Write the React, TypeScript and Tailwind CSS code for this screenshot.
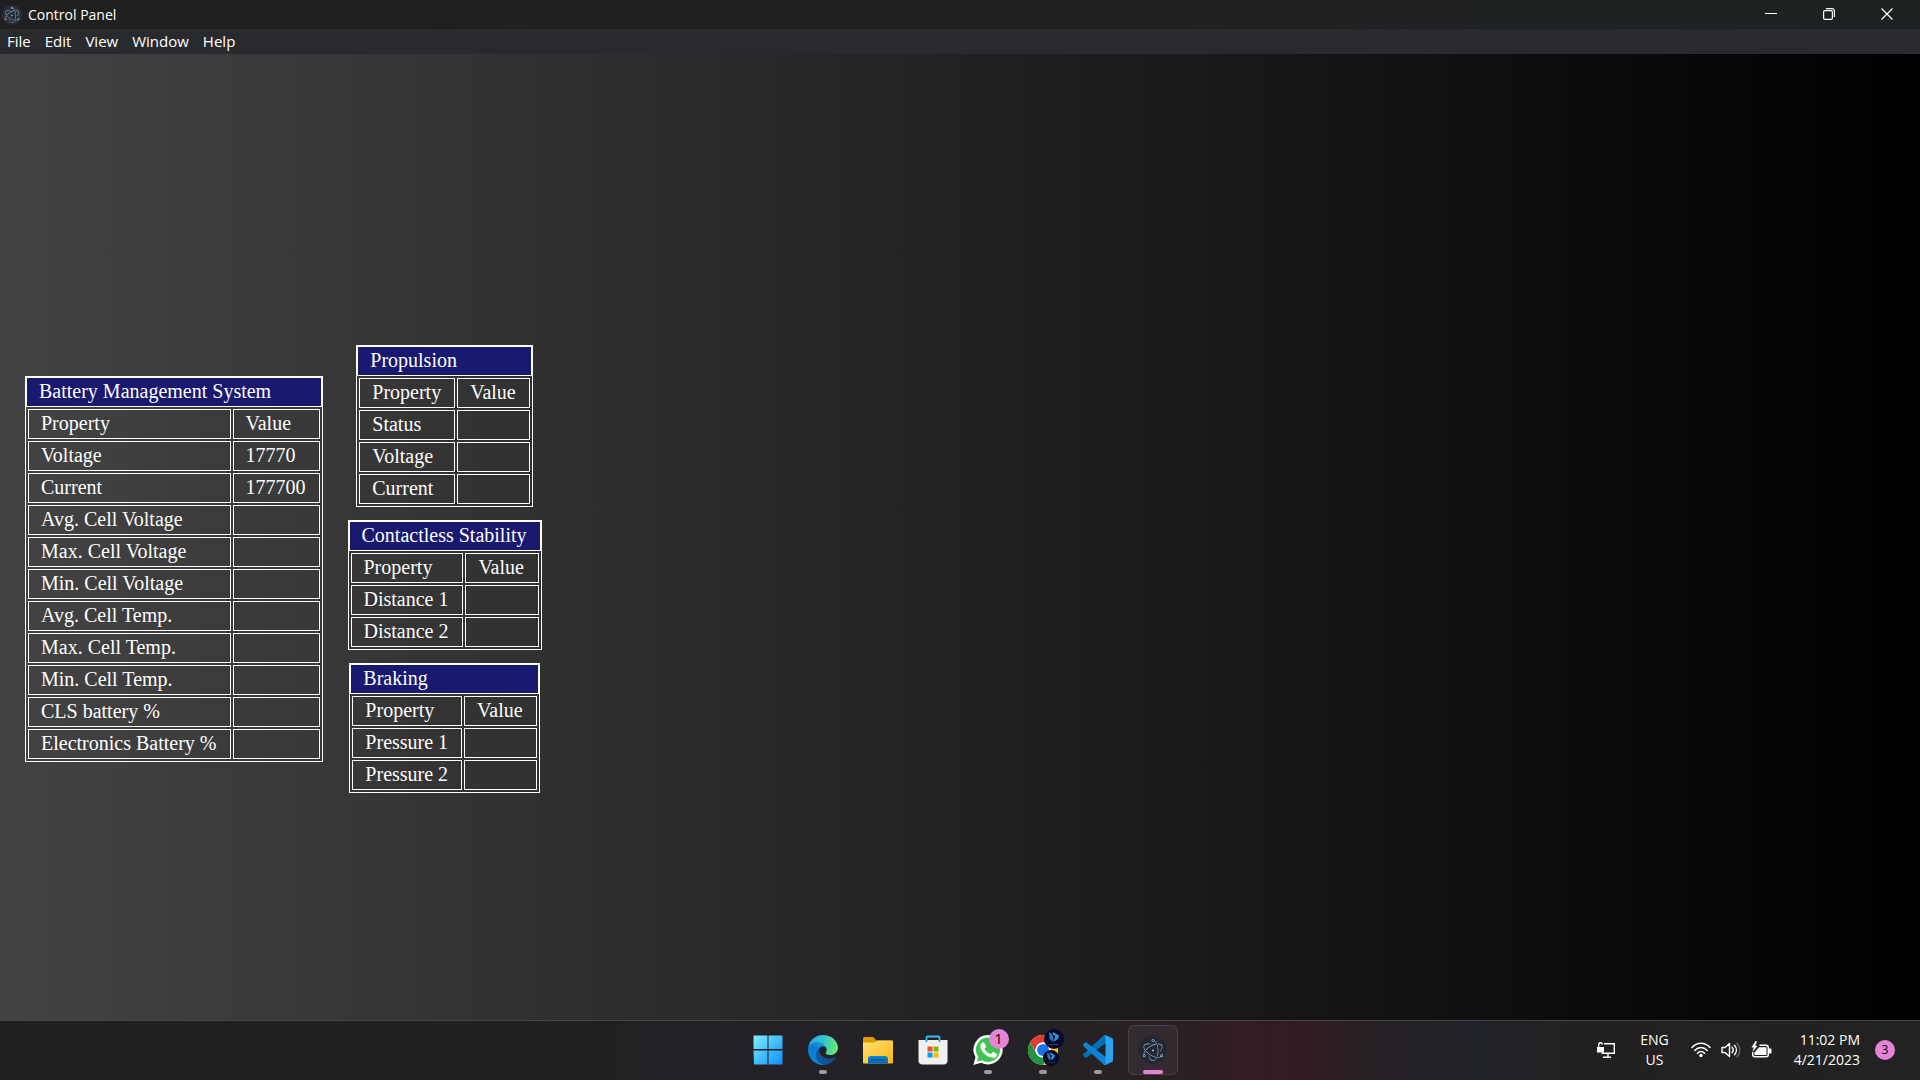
import React from "react";
import { SiElectron } from "react-icons/si";

type Row = [string, string?];

const cell = "border border-white pt-0 pr-[13px] pb-0.5 pl-3";

function Panel({ title, rows }: { title: string; rows: Row[] }) {
  return (
    <section className="border border-white text-xl leading-[26px] text-white">
      <h2 className="border border-white bg-[#191970] pr-[13px] pb-0.5 pl-3">{title}</h2>
      <table className="w-full border-separate border-spacing-[2px]">
        <thead>
          <tr>
            <th scope="col" className={`${cell} text-left font-normal`}>Property</th>
            <th scope="col" className={`${cell} text-left font-normal`}>Value</th>
          </tr>
        </thead>
        <tbody>
          {rows.map(([name, value]) => (
            <tr key={name}>
              <td className={cell}>{name}</td>
              <td className={cell}>{value}</td>
            </tr>
          ))}
        </tbody>
      </table>
    </section>
  );
}

const battery: Row[] = [
  ["Voltage", "17770"],
  ["Current", "177700"],
  ["Avg. Cell Voltage"],
  ["Max. Cell Voltage"],
  ["Min. Cell Voltage"],
  ["Avg. Cell Temp."],
  ["Max. Cell Temp."],
  ["Min. Cell Temp."],
  ["CLS battery %"],
  ["Electronics Battery %"],
];

function Start() {
  return (
    <svg viewBox="0 0 30 30" className="size-[30px]">
      <defs>
        <linearGradient id="win" gradientUnits="userSpaceOnUse" x1="0" y1="0" x2="30" y2="30">
          <stop offset="0" stopColor="#7ff0ff" />
          <stop offset="1" stopColor="#0a8cfa" />
        </linearGradient>
      </defs>
      <path fill="url(#win)" d="M1 .5h13.500V14H.5V1zM15.500 .5h14V14h-14zM.5 15.500h14v14H1zM15.500 15.500h14v14h-14z" />
    </svg>
  );
}

function Edge() {
  return (
    <svg viewBox="0 0 256 256" className="size-[30px]">
      <defs>
        <linearGradient id="ea" x1="63" y1="178" x2="241" y2="178" gradientUnits="userSpaceOnUse">
          <stop offset="0" stopColor="#0c59a4" />
          <stop offset="1" stopColor="#114a8b" />
        </linearGradient>
        <linearGradient id="eb" x1="160" y1="100" x2="46" y2="224" gradientUnits="userSpaceOnUse">
          <stop offset="0" stopColor="#1b9de2" />
          <stop offset=".5" stopColor="#0a7bd0" />
          <stop offset="1" stopColor="#0f7fd8" />
        </linearGradient>
        <linearGradient id="ec" x1="10" y1="60" x2="250" y2="110" gradientUnits="userSpaceOnUse">
          <stop offset="0" stopColor="#2aa8e8" />
          <stop offset=".45" stopColor="#35c1d0" />
          <stop offset="1" stopColor="#66eb6e" />
        </linearGradient>
      </defs>
      <path fill="url(#ea)" d="M231 190.500a94 94 0 0 1-10.500 4.700 102 102 0 0 1-36 6.500c-47.400 0-88.700-32.600-88.700-74.500a31.500 31.500 0 0 1 16.400-27.300C69.400 101.700 58.400 146.400 58.400 172.600c0 74 68.200 81.600 83 81.600 7.900 0 19.800-2.300 27-4.600l1.300-.4a128.300 128.300 0 0 0 66.600-52.800 4 4 0 0 0-5.300-5.900z" />
      <path fill="url(#eb)" d="M105.700 241.400a79.200 79.200 0 0 1-22.700-21.300 80.700 80.700 0 0 1 29.500-120.200c3.200-1.500 8.500-4.200 15.600-4a32.400 32.400 0 0 1 25.700 13 31.900 31.900 0 0 1 6.300 18.700c0-.2 24.500-79.600-80-79.600C36.200 48 .1 89.700.1 126.200a130.500 130.500 0 0 0 12.100 56 128 128 0 0 0 156.400 67 75.500 75.500 0 0 1-62.800-8z" />
      <path fill="url(#ec)" d="M152.300 148.900c-.8 1-3.300 2.500-3.300 5.700 0 2.600 1.700 5.100 4.700 7.200 14.400 10 41.500 8.700 41.600 8.700a59.600 59.600 0 0 0 30.300-8.300 61.400 61.400 0 0 0 30.400-52.900c.3-22.400-8-37.300-11.300-43.900C223.500 23.900 177.700 0 128 0A128 128 0 0 0 0 126.200c.5-36.500 36.800-66 80-66 3.500 0 23.500.3 42 10 16.300 8.600 24.900 19 30.800 29.200 6.200 10.700 7.300 24.100 7.300 29.500 0 5.300-2.700 13.300-7.800 20z" />
    </svg>
  );
}

function Folder() {
  return (
    <svg viewBox="0 0 32 30" className="h-[30px] w-8">
      <defs>
        <linearGradient id="fo" x1="0" y1="0" x2="1" y2="1">
          <stop offset="0" stopColor="#ffe07a" />
          <stop offset="1" stopColor="#f9b90a" />
        </linearGradient>
        <linearGradient id="fb" x1="0" y1="0" x2="0" y2="1">
          <stop offset="0" stopColor="#0e86d6" />
          <stop offset="1" stopColor="#0569b8" />
        </linearGradient>
      </defs>
      <path fill="#de9a05" d="M1 3.500A1.500 1.500 0 0 1 2.500 2h8.800l3.200 3.500H30V13H1z" />
      <path fill="url(#fo)" d="M1 7.500h11.500l3.200-2H30a1 1 0 0 1 1 1v21a1 1 0 0 1-1 1H2a1 1 0 0 1-1-1z" />
      <path fill="url(#fb)" d="M6 28.500V24a3 3 0 0 1 3-3h14a3 3 0 0 1 3 3v4.500z" />
      <path stroke="#064b8a" strokeWidth="1.200" d="M9 24.800h14" />
    </svg>
  );
}

function Store() {
  return (
    <svg viewBox="0 0 30 30" className="size-[30px]">
      <path fill="none" stroke="#31bff2" strokeWidth="1.800" d="M8.500 7V2.500a1 1 0 0 1 1-1h11a1 1 0 0 1 1 1V7" />
      <path fill="#f0f0f0" d="M.5 5h29v20.500a4 4 0 0 1-4 4h-21a4 4 0 0 1-4-4z" />
      <path stroke="#1aa0dc" strokeWidth="1.800" d="M8.500 4.500V7M21.500 4.500V7" />
      <path fill="#f25022" d="M9.500 11.500h5v5h-5z" />
      <path fill="#7fba00" d="M15.500 11.500h5v5h-5z" />
      <path fill="#00a4ef" d="M9.500 17.500h5v5h-5z" />
      <path fill="#ffb900" d="M15.500 17.500h5v5h-5z" />
    </svg>
  );
}

function WhatsApp() {
  return (
    <svg viewBox="0 0 30 30" className="size-[30px]">
      <path fill="#fff" d="M15.200 0A14.700 14.700 0 0 0 2.500 22.200L.3 29.900l8-2.100A14.700 14.700 0 1 0 15.200 0z" />
      <path fill="#3fc351" d="M15.200 2.500A12.200 12.200 0 0 0 4.900 21.300l.3.500-1.300 4.700 4.900-1.300.5.300A12.200 12.200 0 1 0 15.200 2.500z" />
      <path fill="#fff" d="M11.500 8.300c-.3-.7-.6-.7-.9-.7h-.8c-.3 0-.7.1-1.100.5-.4.400-1.400 1.400-1.400 3.400s1.500 4 1.700 4.200c.2.300 2.800 4.500 7 6.100 3.400 1.400 4.100 1.100 4.900 1 .7-.1 2.400-1 2.700-1.900.4-1 .4-1.800.3-2-.1-.2-.4-.3-.8-.5l-2.800-1.300c-.4-.1-.7-.2-1 .2l-1.300 1.600c-.2.300-.5.300-.9.100a11 11 0 0 1-5.500-4.800c-.2-.4 0-.6.2-.8l1.200-1.500c.1-.2.100-.5 0-.7z" />
    </svg>
  );
}

function Chrome() {
  return (
    <svg viewBox="0 0 48 48" className="size-[30px]">
      <circle cx="24" cy="24" r="24" fill="#fff" />
      <path fill="#e33b2e" d="M3.200 12a24 24 0 0 1 41.600 0H24a12 12 0 0 0-10.400 18z" />
      <path fill="#fbc116" d="M44.800 12A24 24 0 0 1 24 48l10.400-18A12 12 0 0 0 24 12z" />
      <path fill="#229342" d="M24 48A24 24 0 0 1 3.200 12l10.400 18A12 12 0 0 0 34.400 30z" />
      <circle cx="24" cy="24" r="12" fill="#fff" />
      <circle cx="24" cy="24" r="9.500" fill="#1a73e8" />
    </svg>
  );
}

function ProfileBadge({ className }: { className: string }) {
  return (
    <svg viewBox="0 0 20 20" className={className}>
      <circle cx="10" cy="10" r="10" fill="#060a2b" />
      <path fill="#2d78c4" d="M5 3.200l2.500 1.300 2 5L8 13 5.500 8.500z" />
      <path fill="#3b8fd8" d="M9 3l6 3.500-1 3.500-5 3 1.500-3.500 1-2.500-3-1.500z" />
      <path stroke="#1d3d7c" d="M5.500 15.500h9" />
    </svg>
  );
}

function Code() {
  return (
    <svg viewBox="0 0 100 100" className="size-[30px]">
      <path fill="#0072ba" d="M96.500 10.700L75.900.8a6.200 6.200 0 0 0-7.100 1.200L1.300 63.500a4.200 4.200 0 0 0 0 6.200l5.500 5a4.200 4.200 0 0 0 5.300.2L93.400 13.300c2.700-2 6.600-.1 6.600 3.300v-.3a6.200 6.200 0 0 0-3.500-5.600z" />
      <path fill="#0b84d6" d="M96.500 89.300l-20.600 9.900a6.200 6.200 0 0 1-7.100-1.200L1.300 36.500a4.200 4.200 0 0 1 0-6.200l5.500-5a4.200 4.200 0 0 1 5.300-.2l81.300 61.600c2.700 2 6.600.1 6.600-3.300v.3a6.200 6.200 0 0 1-3.500 5.600z" />
      <path fill="#29a4ee" d="M75.900 99.200a6.200 6.200 0 0 1-7.100-1.200c2.300 2.300 6.200.7 6.200-2.600V4.700c0-3.300-3.900-4.900-6.200-2.600a6.200 6.200 0 0 1 7.100-1.300l20.600 9.900a6.200 6.200 0 0 1 3.500 5.600v67.400a6.200 6.200 0 0 1-3.500 5.600z" />
    </svg>
  );
}

function Task({ label, state = "idle", children }: { label: string; state?: "idle" | "open" | "active"; children: React.ReactNode }) {
  return (
    <button
      aria-label={label}
      className={
        state === "active"
          ? "relative flex size-[50px] items-center justify-center rounded-md border border-white/10 bg-white/5"
          : "relative flex size-[50px] items-center justify-center rounded-md border border-transparent"
      }
    >
      {children}
      {state === "open" && <span className="absolute bottom-0 left-1/2 h-1 w-2 -translate-x-1/2 rounded-full bg-[#9b9b9b]" />}
      {state === "active" && <span className="absolute bottom-0 left-1/2 h-1 w-5 -translate-x-1/2 rounded-full bg-[#e583d9]" />}
    </button>
  );
}

function Taskbar() {
  return (
    <footer className="grid h-[60px] shrink-0 grid-cols-[1fr_auto_1fr] items-center border-t border-[#444444] bg-[linear-gradient(to_right,#212121_0%,#222121_17%,#212123_30%,#232126_38%,#242225_55%,#2a1f25_62%,#341c22_65%,#351b22_67%,#261f24_71%,#202328_77%,#232021_82%,#222222_100%)] pb-px font-['Open_Sans','Noto_Sans',sans-serif] text-white">
      <div />
      <nav aria-label="Taskbar" className="flex gap-[5px]">
        <Task label="Start"><Start /></Task>
        <Task label="Microsoft Edge" state="open"><Edge /></Task>
        <Task label="File Explorer"><Folder /></Task>
        <Task label="Microsoft Store"><Store /></Task>
        <Task label="WhatsApp" state="open">
          <WhatsApp />
          <span className="absolute top-[3px] right-[3px] flex size-5 items-center justify-center rounded-full bg-[#e583d9] text-sm text-black">1</span>
        </Task>
        <Task label="Google Chrome" state="open">
          <Chrome />
          <ProfileBadge className="absolute top-[3px] right-[3px] size-5" />
          <ProfileBadge className="absolute right-2 bottom-2 size-4" />
        </Task>
        <Task label="Visual Studio Code" state="open"><Code /></Task>
        <Task label="Control Panel" state="active">
          <span className="flex size-7 items-center justify-center rounded-full bg-[#232733]">
            <SiElectron className="size-[22px] text-[#9fc4cf]" />
          </span>
        </Task>
      </nav>
      <div className="flex items-center justify-end pr-[25px]">
        <svg viewBox="0 0 20 18" className="mr-6 h-[18px] w-5" fill="none" stroke="#fff" strokeWidth="1.400">
          <path d="M8 2.700h10.300v9.600H5.500M12 12.300V16M7 16.300h8" />
          <path fill="#fff" stroke="none" d="M1 6h7v5.500H1z" />
          <path d="M2.700 6V3.500a1.800 1.800 0 0 1 3.600 0" />
        </svg>
        <button className="mr-[22px] text-center text-sm leading-5">ENG<br />US</button>
        <svg viewBox="0 0 20 16" className="mr-2.5 h-4 w-5" fill="none" stroke="#fff" strokeWidth="1.500" strokeLinecap="round">
          <path d="M1 5.500C6-.3 14-.3 19 5.500M3.800 8.500c3.600-4 8.800-4 12.400 0M6.500 11.300c2-2.300 5-2.300 7 0" />
          <circle cx="10" cy="13.500" r="1.700" fill="#fff" stroke="none" />
        </svg>
        <svg viewBox="0 0 20 16" className="mr-2.5 h-4 w-5" fill="none" stroke="#fff" strokeWidth="1.400" strokeLinecap="round" strokeLinejoin="round">
          <path d="M1 5.500h3L8.500 1.500v13L4 10.500H1z" />
          <path d="M11 5.300c1.400 1.600 1.400 3.800 0 5.400M13.500 3.300c2.500 2.800 2.500 6.600 0 9.400" />
          <path stroke="#666" d="M16 1.300c3.700 4 3.700 9.400 0 13.400" />
        </svg>
        <svg viewBox="0 0 21 18" className="mr-[22px] h-[18px] w-[21px]" fill="none" stroke="#fff" strokeWidth="1.500">
          <path d="M8.500 4.200H15a2.300 2.300 0 0 1 2.300 2.300v7A2.300 2.300 0 0 1 15 15.800H4a2.300 2.300 0 0 1-2.300-2.300V11" />
          <path fill="#fff" stroke="none" d="M3.500 14v-2.500L8 6.300h7.500V14zM18 7.500h1.500a1 1 0 0 1 1 1v3a1 1 0 0 1-1 1H18zM4.500 0L.5 6.500h2.200L1.500 11l5-6.300H4.200L6 .5z" />
        </svg>
        <button className="mr-[15px] text-right text-sm leading-5">11:02 PM<br />4/21/2023</button>
        <span className="flex size-5 items-center justify-center rounded-full bg-[#e583d9] text-xs text-black">3</span>
      </div>
    </footer>
  );
}

export default function App() {
  return (
    <div className="flex h-screen flex-col overflow-hidden bg-black">
      <header className="flex h-[29px] shrink-0 items-center justify-between bg-[linear-gradient(to_right,#202020_20%,#221f20_30%,#221f20_60%,#1f2122_75%,#1e2122_100%)] font-['Open_Sans','Noto_Sans',sans-serif] text-sm text-white">
        <div className="flex items-center gap-1.5 pl-0.5">
          <span className="flex size-5 items-center justify-center rounded-full bg-[#2b2e3b]">
            <SiElectron className="size-4 text-[#9fc4cf]" />
          </span>
          <h1>Control Panel</h1>
        </div>
        <div className="flex self-start pr-1">
          <button aria-label="Minimize" className="flex h-7 w-[58px] items-center justify-center">
            <svg viewBox="0 0 12 12" className="size-3" stroke="#fff"><path d="M0 5.500h12" /></svg>
          </button>
          <button aria-label="Restore" className="flex h-7 w-[58px] items-center justify-center">
            <svg viewBox="0 0 12 12" className="size-3" fill="none" stroke="#fff" strokeWidth="1.200">
              <rect x=".6" y="2.600" width="8.800" height="8.800" rx="1.300" />
              <path d="M3 .6h6a2.400 2.400 0 0 1 2.400 2.400v6" />
            </svg>
          </button>
          <button aria-label="Close" className="flex h-7 w-[58px] items-center justify-center">
            <svg viewBox="0 0 12 12" className="size-3" stroke="#fff" strokeWidth="1.200"><path d="M.5.5l11 11M11.500.5l-11 11" /></svg>
          </button>
        </div>
      </header>
      <nav aria-label="Menu" className="flex h-[25px] shrink-0 items-center gap-[14px] bg-[#292a2d] px-[7px] font-['Open_Sans','Noto_Sans',sans-serif] text-[15px] text-white">
        <button>File</button>
        <button>Edit</button>
        <button>View</button>
        <button>Window</button>
        <button>Help</button>
      </nav>
      <main className="flex flex-1 items-center gap-[25px] bg-[linear-gradient(to_right,#434343,#000000)] px-[25px] pt-16 font-['Liberation_Serif','Times_New_Roman',serif]">
        <Panel title="Battery Management System" rows={battery} />
        <div className="flex flex-col items-center gap-[13px]">
          <Panel title="Propulsion" rows={[["Status"], ["Voltage"], ["Current"]]} />
          <Panel title="Contactless Stability" rows={[["Distance 1"], ["Distance 2"]]} />
          <Panel title="Braking" rows={[["Pressure 1"], ["Pressure 2"]]} />
        </div>
      </main>
      <Taskbar />
    </div>
  );
}
